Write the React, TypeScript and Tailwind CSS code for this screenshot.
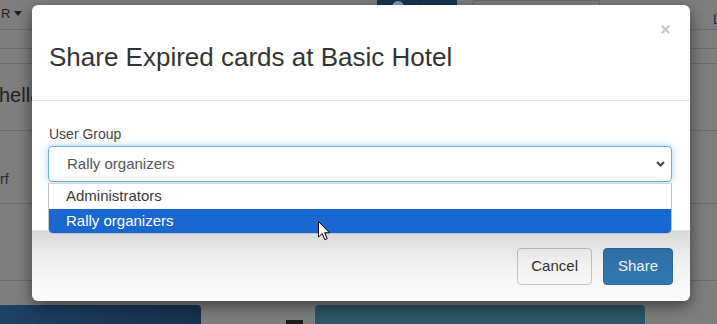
import React from 'react';

// Dimmed page behind the modal
function BackgroundPage() {
  return (
    <div className="flex flex-col w-[717px] h-[324px] text-[#1f1f1f]">
      {/* Top bar */}
      <div className="flex items-start h-[30px] border-b border-[#6c6c6c] shrink-0">
        <div className="w-[377px] shrink-0 flex items-center gap-[4px] pt-[6px] pl-[1px] text-[13px] leading-[15px]">
          <span>R</span>
          <svg width="8" height="5" viewBox="0 0 8 5">
            <path d="M0 0 L8 0 L4 5 Z" fill="#1f1f1f" />
          </svg>
        </div>
        <div className="flex shrink-0 w-[80px] h-[24px] bg-[#1a3350] rounded-b-[4px]">
          <div className="w-[43px] border-r border-[#142a44] flex justify-center pt-[1px]">
            <div className="w-[12px] h-[12px] rounded-full bg-[#8a9ab0]" />
          </div>
        </div>
        <div className="ml-[16px] shrink-0 w-[127px] h-[24px] border border-[#6a6a6a] bg-[#808080] rounded-b-[4px] text-[13px] leading-[20px] text-[#222] pl-[16px]">
          Expired cards
        </div>
        <div className="ml-[113px] shrink-0 pt-[11px] text-[14px] leading-[16px] text-[#1c2c4a] whitespace-nowrap">
          L
        </div>
      </div>
      <div className="h-[19px] border-b border-[#6c6c6c] shrink-0" />
      <div className="h-[15px] border-b border-[#6c6c6c] shrink-0" />
      <div className="h-[67px] border-b border-[#6c6c6c] shrink-0 pt-[19px] -ml-[1px] text-[20px] leading-[24px] text-[#222]">
        hella
      </div>
      <div className="h-[73px] border-b border-[#6c6c6c] shrink-0 pt-[40px] text-[14px] leading-[16px] text-[#2a2a2a]">
        rf
      </div>
      <div className="h-[77px] border-b border-[#6c6c6c] shrink-0" />
      <div className="h-[24px] shrink-0" />
      {/* Tiles */}
      <div className="flex items-start h-[30px] shrink-0">
        <div className="w-[201px] shrink-0 h-[30px] rounded-tr-[4px] bg-linear-to-r from-[#1d4266] to-[#17314d]" />
        <div className="ml-[85px] shrink-0 mt-[15px] w-[17px] h-[10px] bg-[#1e1e1e]" />
        <div className="ml-[12px] shrink-0 w-[330px] h-[30px] rounded-t-[4px] bg-linear-to-b from-[#29545f] to-[#2c5f6b]" />
      </div>
    </div>
  );
}

function Cursor() {
  return (
    <svg
      className="absolute z-20 left-[318px] top-[221px]"
      width="13"
      height="20"
      viewBox="0 0 13 20"
    >
      <path
        d="M0.5 0.5 L0.5 16 L4.2 12.6 L6.8 18.6 L9.2 17.6 L6.7 11.8 L11.5 11.8 Z"
        fill="#ffffff"
        stroke="#000000"
        strokeWidth="1"
        strokeLinejoin="round"
      />
    </svg>
  );
}

export default function App() {
  return (
    <div className="relative w-[717px] h-[324px] overflow-hidden bg-[#7e7e7e] font-['Liberation_Sans',Arial,sans-serif]">
      <BackgroundPage />

      {/* Modal */}
      <div className="absolute left-[32px] top-[5px] w-[658px] rounded-[6px] bg-white shadow-[0_5px_15px_rgba(0,0,0,0.5)] overflow-hidden">
        {/* Header */}
        <div className="relative h-[96px] border-b border-[#e5e5e5] pl-[17px] pt-[37px]">
          <h4 className="text-[26px] leading-[30px] text-[#333]">Share Expired cards at Basic Hotel</h4>
          <svg className="absolute right-[20px] top-[20px]" width="9" height="9" viewBox="0 0 9 9">
            <path d="M0.8 0.8 L8.2 8.2 M8.2 0.8 L0.8 8.2" stroke="#c6c6c6" strokeWidth="2.2" />
          </svg>
        </div>

        {/* Body */}
        <div className="relative z-10 pt-[23px] pb-[48px] pl-[16px]">
          <label className="block pl-[1px] mb-[2px] text-[14px] leading-[20px] text-[#444]">User Group</label>
          <div className="relative w-[624px]">
            <div className="h-[36px] flex items-center justify-between pl-[18px] pr-[6px] border border-[#66afe9] rounded-[4px] shadow-[0_0_7px_rgba(102,175,233,0.6)] text-[15px] text-[#555]">
              <span>Rally organizers</span>
              <svg width="9" height="6" viewBox="0 0 9 6">
                <path d="M1 1 L4.5 4.5 L8 1" fill="none" stroke="#444" strokeWidth="2" />
              </svg>
            </div>
            {/* Open options list */}
            <div className="absolute left-0 top-[37px] w-full border border-[#c3c3c3] border-t-[#d6d6d6] rounded-b-[5px] bg-white overflow-hidden text-[15px]">
              <div className="h-[25px] flex items-center pl-[17px] text-[#3a3a3a]">Administrators</div>
              <div className="h-[24px] flex items-center pl-[17px] bg-[#1a67d2] text-white">Rally organizers</div>
            </div>
          </div>
        </div>

        {/* Footer */}
        <div className="relative h-[71px] border-t border-[#e5e5e5] flex justify-end items-start gap-[11px] pt-[17px] pr-[17px] text-[15px]">
          <button className="h-[37px] px-[13px] rounded-[4px] border border-[#cccccc] bg-white text-[#333]">Cancel</button>
          <button className="h-[37px] px-[14px] rounded-[4px] border border-[#2e6da4] bg-[#337ab7] text-white">Share</button>
          <div className="pointer-events-none absolute inset-0 bg-linear-to-b from-[rgba(0,0,0,0.15)] via-[rgba(0,0,0,0.05)] to-[rgba(0,0,0,0.01)]" />
        </div>
      </div>

      <Cursor />
    </div>
  );
}
